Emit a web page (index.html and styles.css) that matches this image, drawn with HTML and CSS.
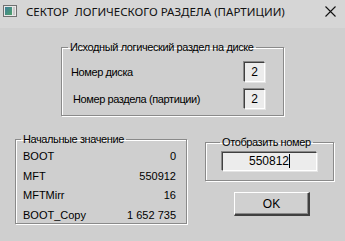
FILE: index.html
```html
<!DOCTYPE html>
<html>
<head>
<meta charset="utf-8">
<link rel="stylesheet" href="styles.css">
</head>
<body>
<div class="window">
  <div class="titlebar">
    <svg class="appicon" width="14" height="12" viewBox="0 0 14 12">
      <defs>
        <linearGradient id="g" x1="0" y1="0" x2="1" y2="1">
          <stop offset="0" stop-color="#3d7f9a"/>
          <stop offset="1" stop-color="#4fa06a"/>
        </linearGradient>
      </defs>
      <rect x="0.5" y="0.5" width="13" height="11" fill="#e8e8e8" stroke="#707070"/>
      <rect x="2" y="2" width="7" height="8" fill="url(#g)"/>
      <rect x="10" y="2" width="2" height="8" fill="#c8c8c8"/>
    </svg>
    <span class="title">СЕКТОР&nbsp; ЛОГИЧЕСКОГО РАЗДЕЛА (ПАРТИЦИИ)</span>
    <svg class="close" width="11" height="11" viewBox="0 0 11 11">
      <path d="M0.5 0.5 L10.5 10.5 M10.5 0.5 L0.5 10.5" stroke="#111" stroke-width="1.1" fill="none"/>
    </svg>
  </div>
  <div class="content">
    <fieldset class="group src">
      <legend class="cy">Исходный логический раздел на диске</legend>
      <div class="srcbody">
        <div class="row">
          <span class="lbl cy">Номер диска</span>
          <span class="sunken num">2</span>
        </div>
        <div class="row">
          <span class="lbl lbl2 cy">Номер раздела (партиции)</span>
          <span class="sunken num">2</span>
        </div>
      </div>
    </fieldset>
    <div class="bottom">
      <fieldset class="group init">
        <legend class="cy">Начальные значение</legend>
        <div class="initbody">
          <div class="vrow"><span>BOOT</span><span>0</span></div>
          <div class="vrow"><span>MFT</span><span>550912</span></div>
          <div class="vrow"><span>MFTMirr</span><span>16</span></div>
          <div class="vrow"><span>BOOT_Copy</span><span>1 652 735</span></div>
        </div>
      </fieldset>
      <div class="rightcol">
        <fieldset class="group show">
          <legend class="cy">Отобразить номер</legend>
          <div class="showbody">
            <div class="sunken field">550812<span class="caret"></span></div>
          </div>
        </fieldset>
        <div class="btn">OK</div>
      </div>
    </div>
  </div>
</div>
</body>
</html>
```
FILE: styles.css
```css
html, body {
  margin: 0;
  padding: 0;
}
body {
  width: 345px;
  height: 241px;
  overflow: hidden;
  background: #cfcfcf;
  font-family: "Liberation Sans", Arial, sans-serif;
  font-size: 11px;
  color: #000;
}
.window {
  width: 345px;
  height: 241px;
  display: flex;
  flex-direction: column;
}
.titlebar {
  height: 28px;
  background: #d6d6d6;
  display: flex;
  align-items: center;
  padding: 0 9px 0 3px;
  box-sizing: border-box;
}
.appicon {
  margin-top: -6px;
  margin-right: 9px;
}
.title {
  font-family: "Noto Sans", "Open Sans", sans-serif;
  font-size: 11.5px;
  color: #111;
  flex: 1;
  margin-top: -6px;
  white-space: nowrap;
}
.close {
  margin-top: -6px;
}
.content {
  flex: 1;
  display: flex;
  flex-direction: column;
}
.cy {
  letter-spacing: -0.4px;
  white-space: nowrap;
}
.group {
  margin: 0;
  padding: 0;
  border: 1px solid #8a8a8a;
  box-shadow: 1px 1px 0 #fff, inset 1px 1px 0 #fff;
  min-width: 0;
  box-sizing: border-box;
}
.group legend {
  padding: 0 2px;
  margin-left: 5px;
  line-height: 14px;
}
.src {
  margin: 12px 0 0 61px;
  width: 223px;
  height: 76px;
}
.src legend {
  margin-left: 6px;
}
.srcbody {
  padding: 8px 18px 0 9px;
  display: flex;
  flex-direction: column;
  gap: 7px;
}
.row {
  display: flex;
  align-items: center;
  justify-content: space-between;
}
.lbl2 {
  margin-left: 2px;
}
.sunken {
  background: #ececec;
  border-top: 1px solid #404040;
  border-left: 1px solid #404040;
  border-right: 1px solid #fff;
  border-bottom: 1px solid #fff;
  box-shadow: -1px -1px 0 #8a8a8a, 1px 1px 0 #e4e4e4;
}
.num {
  width: 19px;
  height: 18px;
  line-height: 18px;
  text-align: center;
  font-size: 12px;
}
.bottom {
  display: flex;
  margin-top: 16px;
  margin-left: 15px;
  gap: 18px;
  align-items: flex-start;
}
.init {
  width: 172px;
  height: 92px;
}
.initbody {
  padding: 1px 10px 0 7px;
}
.vrow {
  display: flex;
  justify-content: space-between;
  height: 19.5px;
  line-height: 19.5px;
}
.rightcol {
  margin-top: 3px;
  display: flex;
  flex-direction: column;
  align-items: flex-start;
}
.show {
  width: 129px;
  height: 46px;
}
.show legend {
  margin-left: 14px;
}
.showbody {
  padding: 3px 0 0 16px;
}
.field {
  width: 93px;
  height: 17px;
  line-height: 17px;
  text-align: center;
  font-size: 12px;
}
.caret {
  display: inline-block;
  width: 1px;
  height: 14px;
  background: #000;
  vertical-align: -3px;
}
.btn {
  margin: 11px 0 0 29px;
  width: 76px;
  height: 24px;
  box-sizing: border-box;
  border-top: 1px solid #fff;
  border-left: 1px solid #fff;
  border-right: 2px solid #404040;
  border-bottom: 2px solid #404040;
  box-shadow: inset -1px -1px 0 #8a8a8a;
  background: #d0d0d0;
  display: flex;
  align-items: center;
  justify-content: center;
  font-size: 12px;
}
```
